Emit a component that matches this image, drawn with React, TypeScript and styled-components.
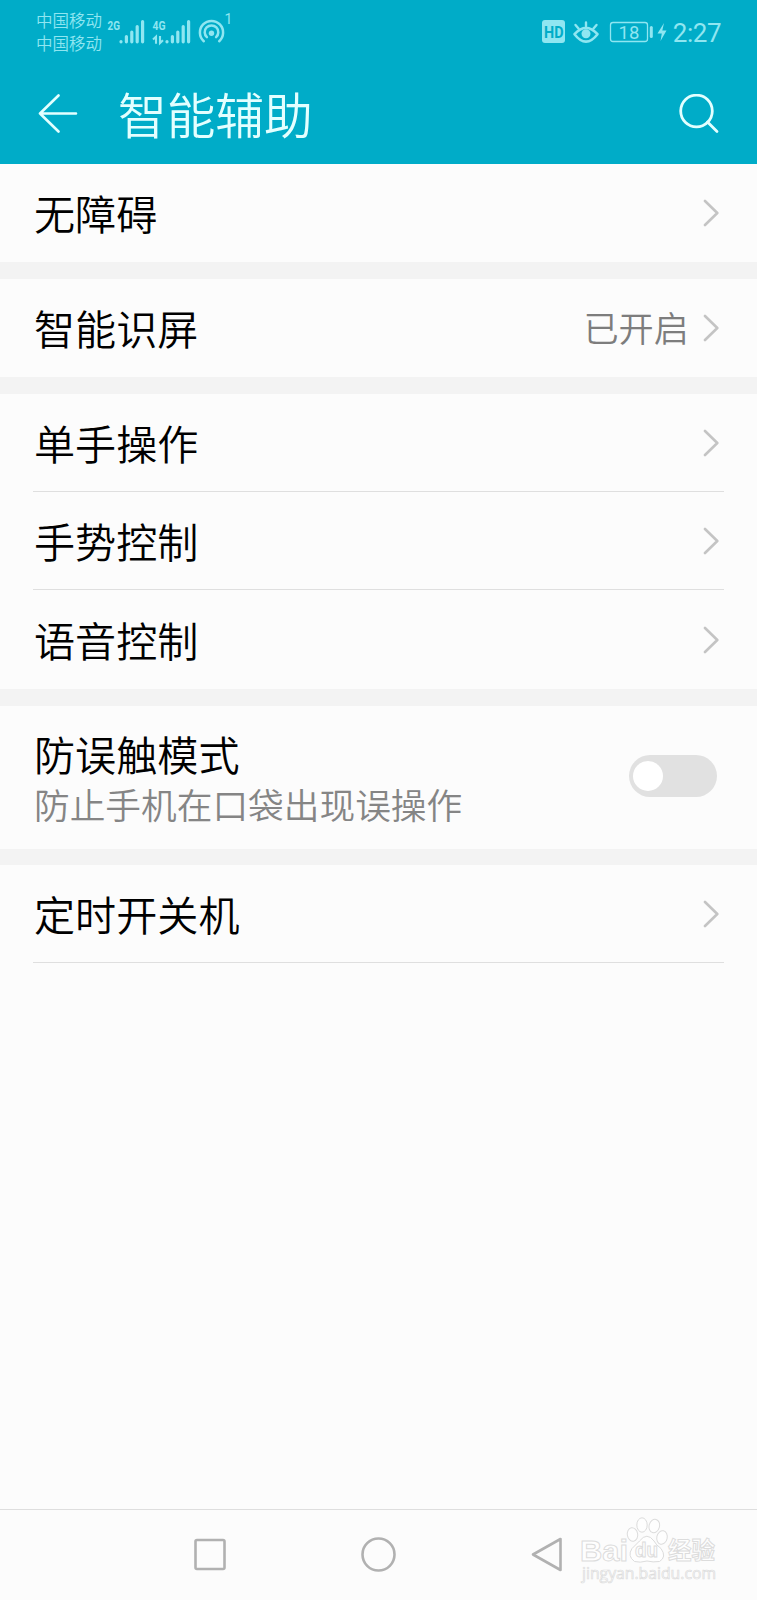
import React from 'react';
import styled, { createGlobalStyle } from 'styled-components';

const GlobalStyle = createGlobalStyle`
  * { box-sizing: border-box; }
  body {
    margin: 0;
    background: #fcfcfc;
    font-family: Roboto, 'Noto Sans CJK SC', sans-serif;
  }
`;

const Screen = styled.div`
  position: relative;
  display: flex;
  flex-direction: column;
  width: 757px;
  height: 1600px;
  overflow: hidden;
  background: #fcfcfc;
`;

const Header = styled.header`
  height: 164px;
  flex: none;
  background: #00acc8;
`;

const StatusBar = styled.div`
  display: flex;
  justify-content: space-between;
  height: 64px;
  padding: 0 36px 0 36px;
  color: #8fe6f1;
`;

const StatusGroup = styled.div`
  display: flex;
  align-items: center;
`;

const Carriers = styled.div`
  width: 71px;
  font: 350 16.5px/23px 'Noto Sans CJK SC', sans-serif;
`;

const Clock = styled.span`
  margin-left: 6px;
  font-size: 26px;
  line-height: 30px;
  letter-spacing: -0.5px;
  padding-top: 1px;
`;

const TitleBar = styled.div`
  display: flex;
  align-items: center;
  height: 100px;
  padding: 0 38px;
  color: #e3ffff;
`;

const Title = styled.h1`
  flex: 1;
  margin: 0 0 0 40px;
  font: 350 48.7px/72px 'Noto Sans CJK SC', sans-serif;
  padding-bottom: 2px;
`;

const List = styled.main`
  flex: 1;
`;

const Group = styled.section<{ $gap?: number }>`
  border-bottom: ${(p) => p.$gap ?? 17}px solid #f3f3f3;
`;

const Row = styled.div<{ $height?: number }>`
  display: flex;
  align-items: center;
  height: ${(p) => p.$height ?? 98}px;
  padding: 0 38px 0 34px;
`;

const Divider = styled.hr`
  height: 1px;
  margin: -1px 33px 0;
  border: 0;
  background: #dfdfdf;
`;

const Labels = styled.div`
  flex: 1;
  padding-bottom: 2px;
`;

const Label = styled.div`
  color: #000;
  font: 350 41.1px/56px 'Noto Sans CJK SC', sans-serif;
`;

const Hint = styled.div`
  padding-bottom: 1px;
  color: #858585;
  font: 350 35.7px/46px 'Noto Sans CJK SC', sans-serif;
`;

const Value = styled.span`
  margin-right: 14px;
  padding-bottom: 2px;
  color: #7d7d7d;
  font: 350 35.2px/52px 'Noto Sans CJK SC', sans-serif;
`;

const Toggle = styled.div`
  width: 88px;
  height: 42px;
  margin: 0 2px 3px 0;
  padding: 6px 4px;
  border-radius: 21px;
  background: #e1e1e1;
`;

const Knob = styled.div`
  width: 30px;
  height: 30px;
  border-radius: 50%;
  background: #fff;
`;

const NavBar = styled.nav`
  display: flex;
  justify-content: center;
  align-items: center;
  height: 91px;
  flex: none;
  border-top: 1px solid #dedede;
`;

const NavButton = styled.div`
  display: flex;
  justify-content: center;
  width: 168.5px;
`;

const Watermark = styled.svg`
  position: absolute;
  left: 574px;
  top: 1512px;
`;

const Chevron = () => (
  <svg width="16" height="28" viewBox="0 0 16 28" fill="none" stroke="#c4c4c4" strokeWidth="2.6" strokeLinecap="round" strokeLinejoin="round">
    <path d="M2 2 L14.3 14 L2 26" />
  </svg>
);

const StatusIconsLeft = () => (
  <svg width="128" height="40" viewBox="107 11.5 128 40" fill="none" stroke="#8fe6f1">
    <g fill="#8fe6f1" stroke="none" fontFamily="Roboto, sans-serif" fontWeight="700" fontSize="13.5">
      <text x="107.5" y="29.5" textLength="12.5" lengthAdjust="spacingAndGlyphs">2G</text>
      <text x="152.5" y="29.5" textLength="13" lengthAdjust="spacingAndGlyphs">4G</text>
    </g>
    <g strokeWidth="3.2" strokeLinecap="round">
      <path d="M121 41v.3M126.4 36v5.3M131.8 31.5v9.8M137.2 26v15.3M142.6 21v20.3" />
      <path d="M167 41v.3M172.4 36v5.3M177.8 31.5v9.8M183.2 26v15.3M188.6 21v20.3" />
    </g>
    <path strokeWidth="2.1" d="M153 39l3-2.800v7M160 35.500v7l3-2.800" />
    <g strokeWidth="2.5" strokeLinecap="round">
      <path d="M203.800 40.700a11.600 11.600 0 1 1 15.400 0" />
      <path d="M206.900 36.700a6.800 6.800 0 1 1 9.200 0" />
    </g>
    <circle cx="211.5" cy="32.700" r="2.700" fill="#8fe6f1" stroke="none" />
    <text x="224.500" y="23.500" fill="#8fe6f1" stroke="none" fontFamily="Roboto, sans-serif" fontSize="14">1</text>
  </svg>
);

const StatusIconsRight = () => (
  <svg width="126" height="40" viewBox="541 12 126 40" fill="none" stroke="#8fe6f1">
    <rect x="542" y="20" width="23" height="23" rx="3" fill="#8fe6f1" stroke="none" />
    <text x="544" y="37.500" fill="#00acc8" stroke="none" fontFamily="Roboto, sans-serif" fontWeight="700" fontSize="16" textLength="19.500" lengthAdjust="spacingAndGlyphs">HD</text>
    <path strokeWidth="2.600" strokeLinejoin="round" d="M574.500 34.200Q586 21.500 597.500 34.200Q586 49 574.500 34.200Z" />
    <circle cx="586" cy="33.800" r="4.500" fill="#8fe6f1" stroke="none" />
    <path strokeWidth="2.400" strokeLinecap="round" d="M586 22.500v3.500M575.500 25l3 3.500M596.500 25l-3 3.500" />
    <rect x="610.500" y="22.500" width="37" height="19" rx="2.500" strokeWidth="1.300" />
    <text x="618.500" y="38.700" fill="#8fe6f1" stroke="none" fontFamily="Roboto, sans-serif" fontSize="18.500">18</text>
    <path strokeWidth="3" strokeLinecap="round" d="M651.300 27.500v9" />
    <path fill="#8fe6f1" stroke="none" d="M664 23l-6.500 10.500h4.300l-1.300 7.500 6-10.500h-4.200z" />
  </svg>
);

const PawWatermark = () => (
  <Watermark width="150" height="76" viewBox="0 0 150 76" fill="#fefefe" stroke="#dcdcdc" strokeWidth="1">
    <g fontFamily="'Liberation Sans', sans-serif" fontWeight="700">
      <text x="6" y="48.500" fontSize="30" textLength="48" lengthAdjust="spacingAndGlyphs">Bai</text>
      <ellipse cx="58.500" cy="22.500" rx="5.200" ry="6.800" transform="rotate(-10 58.500 22.500)" />
      <ellipse cx="68" cy="13" rx="5.200" ry="7.200" />
      <ellipse cx="80.300" cy="14" rx="5.200" ry="6.800" transform="rotate(15 80.300 14)" />
      <ellipse cx="88" cy="25.500" rx="5.200" ry="6.800" transform="rotate(12 88 25.500)" />
      <path d="M65.500 29Q73 19.500 80 29Q82 33 87 36.500Q93 45 85.500 49.500Q79 50.500 73 49Q66 51 60.500 49.500Q53 44 58 36.500Z" />
      <text x="61" y="45" fontSize="20" textLength="23" lengthAdjust="spacingAndGlyphs">du</text>
    </g>
    <text x="94" y="46.500" fontFamily="'Noto Sans CJK SC', sans-serif" fontWeight="700" fontSize="23.500">经验</text>
    <text x="8" y="67" fontFamily="'Open Sans', sans-serif" fontSize="15.500" strokeWidth="0.700" textLength="134" lengthAdjust="spacingAndGlyphs">jingyan.baidu.com</text>
  </Watermark>
);

const LinkRow = ({ label, value, height }: { label: string; value?: string; height?: number }) => (
  <Row $height={height}>
    <Labels>
      <Label>{label}</Label>
    </Labels>
    {value && <Value>{value}</Value>}
    <Chevron />
  </Row>
);

export default function App() {
  return (
    <Screen>
      <GlobalStyle />
      <Header>
        <StatusBar>
          <StatusGroup>
            <Carriers>
              <div>中国移动</div>
              <div>中国移动</div>
            </Carriers>
            <StatusIconsLeft />
          </StatusGroup>
          <StatusGroup>
            <StatusIconsRight />
            <Clock>2:27</Clock>
          </StatusGroup>
        </StatusBar>
        <TitleBar>
          <svg width="40" height="40" viewBox="0 0 40 40" fill="none" stroke="currentColor" strokeWidth="2.600" strokeLinecap="round" strokeLinejoin="round">
            <path d="M38 19.500H2M20.500 1.500L2 19.500l18.500 18" />
          </svg>
          <Title>智能辅助</Title>
          <svg width="40" height="40" viewBox="0 0 40 40" fill="none" stroke="currentColor" strokeWidth="2.800" strokeLinecap="round">
            <circle cx="17.500" cy="17" r="15.800" />
            <path d="M28.500 28l9.500 9.500" />
          </svg>
        </TitleBar>
      </Header>
      <List>
        <Group>
          <LinkRow label="无障碍" />
        </Group>
        <Group>
          <LinkRow label="智能识屏" value="已开启" />
        </Group>
        <Group>
          <LinkRow label="单手操作" />
          <Divider />
          <LinkRow label="手势控制" />
          <Divider />
          <LinkRow label="语音控制" height={99} />
        </Group>
        <Group $gap={16}>
          <Row $height={143}>
            <Labels>
              <Label>防误触模式</Label>
              <Hint>防止手机在口袋出现误操作</Hint>
            </Labels>
            <Toggle>
              <Knob />
            </Toggle>
          </Row>
        </Group>
        <LinkRow label="定时开关机" />
        <Divider />
      </List>
      <NavBar>
        <NavButton>
          <svg width="34" height="34" viewBox="0 0 34 34" fill="none" stroke="#b1b1b1" strokeWidth="2.600">
            <rect x="2.500" y="2" width="29" height="29" rx="1.500" />
          </svg>
        </NavButton>
        <NavButton>
          <svg width="36" height="36" viewBox="0 0 36 36" fill="none" stroke="#b1b1b1" strokeWidth="2.600">
            <circle cx="17.500" cy="17.500" r="16" />
          </svg>
        </NavButton>
        <NavButton>
          <svg width="34" height="36" viewBox="0 0 34 36" fill="none" stroke="#b1b1b1" strokeWidth="2.600" strokeLinejoin="round">
            <path d="M30.500 2v31L3 17.500z" />
          </svg>
        </NavButton>
      </NavBar>
      <PawWatermark />
    </Screen>
  );
}
